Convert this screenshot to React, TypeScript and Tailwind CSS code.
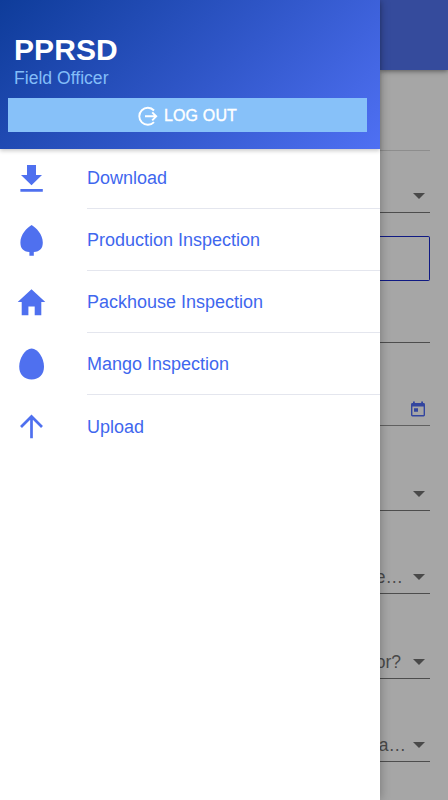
import React from 'react';
import clsx from 'clsx';

type MenuItemProps = {
  label: string;
  icon: React.ReactNode;
  className?: string;
  labelClassName?: string;
};

type FieldProps = {
  className: string;
  text?: string;
  textClassName?: string;
  children?: React.ReactNode;
};

const DownloadIcon = () => (
  <path d="M11 3h9v10h6L15.500 23.200 5 13h6zM4.400 27h22.400v2.700H4.400z" />
);

const LeafIcon = () => (
  <path d="M15.600 2c4.500 2.500 11.200 9.600 11.200 17.400 0 6-2.800 8.800-9 9.700v3.700h-4.400v-3.700C7.200 28.200 4.400 25.400 4.400 19.400 4.400 11.600 11.100 4.500 15.600 2z" />
);

const HomeIcon = () => (
  <path d="M15.500 4.200 29.300 17h-4v13.300h-6.600v-8.800h-6.300v8.800H5.700V17h-4z" />
);

const EggIcon = () => (
  <path d="M15.600 1.500c6.500 0 12.400 9.700 12.400 18.300 0 8-5 12.700-12.400 12.700S3.200 27.800 3.200 19.800C3.200 11.200 9.100 1.500 15.600 1.500z" />
);

const UploadIcon = () => (
  <path
    d="M15.500 28.300V7M5 17 15.500 6.500 26 17"
    fill="none"
    stroke="currentColor"
    strokeWidth="2.700"
  />
);

const LogOutIcon = () => (
  <svg
    className="size-5"
    viewBox="0 0 20 20"
    fill="none"
    stroke="currentColor"
    strokeWidth="1.9"
  >
    <path d="M16 4.500A8.500 8.500 0 1 0 16 16.100M7 10.300h11M14.200 6.300l4 4-4 4" />
  </svg>
);

const CalendarIcon = () => (
  <svg
    className="h-4 w-[14px] text-[#32459f]"
    viewBox="0 0 14 16"
    fill="currentColor"
  >
    <path
      fillRule="evenodd"
      d="M2 .500h1.800v1.500h6.400V.500H12v1.500h.600A1.400 1.400 0 0 1 14 3.400v10.600a1.400 1.400 0 0 1-1.400 1.400H1.400A1.400 1.400 0 0 1 0 14V3.400A1.400 1.400 0 0 1 1.400 2H2zM1.400 5.500v8.500h11.200V5.500zM3 7.300h4v3.500H3z"
    />
  </svg>
);

const Caret = () => (
  <svg className="h-[6px] w-3 shrink-0 text-[#494949]" viewBox="0 0 12 6">
    <path d="M0 0h12L6 6z" fill="currentColor" />
  </svg>
);

const MenuItem = ({
  label,
  icon,
  className,
  labelClassName,
}: MenuItemProps) => (
  <li className={clsx('flex pl-4', className ?? 'h-[62px]')}>
    <div className="flex w-[71px] items-center border-b border-transparent">
      <svg className="h-[33px] w-8" viewBox="0 0 32 33" fill="currentColor">
        {icon}
      </svg>
    </div>
    <div
      className={clsx(
        'flex flex-1 items-center border-b border-[#e4e6ee] text-lg text-[#3f67ee]',
        labelClassName
      )}
    >
      {label}
    </div>
  </li>
);

const Field = ({ className, text, textClassName, children }: FieldProps) => (
  <div
    className={clsx('flex w-[50px] items-end justify-end border-b', className)}
  >
    {text ? (
      <span
        className={clsx(
          'shrink-0 text-[17.5px] leading-5 text-[#494949]',
          textClassName
        )}
      >
        {text}
      </span>
    ) : null}
    {children}
  </div>
);

const App = () => {
  return (
    <div className="flex h-[800px] w-[448px] overflow-hidden bg-[#a6a6a6] font-['Liberation_Sans',sans-serif]">
      <aside className="z-10 flex w-[380px] shrink-0 flex-col bg-white shadow-[0_0_10px_rgba(0,0,0,0.3)]">
        <header className="h-[149px] bg-[linear-gradient(135deg,#0e3c9a_0%,#2e55c6_50%,#4f70f3_100%)] px-2 pt-8 shadow-[0_2px_4px_rgba(0,0,0,0.2)]">
          <h1 className="pl-1.5 text-[30px] leading-9 font-bold tracking-[0.1px] text-white">
            PPRSD
          </h1>
          <p className="pt-px pl-1.5 text-[17.6px] leading-[18px] text-[#83bdf8]">
            Field Officer
          </p>
          <button className="mt-[11px] flex h-[34px] w-[359px] items-center justify-center gap-1.5 bg-[#87c1f9] pt-px text-base tracking-[0.15px] text-white [-webkit-text-stroke:0.4px_white]">
            <LogOutIcon />
            <span className="pt-px">LOG OUT</span>
          </button>
        </header>
        <ul className="text-[#4f70ef]">
          <MenuItem
            label="Download"
            icon={<DownloadIcon />}
            className="h-[60px]"
            labelClassName="pb-0.5"
          />
          <MenuItem label="Production Inspection" icon={<LeafIcon />} />
          <MenuItem label="Packhouse Inspection" icon={<HomeIcon />} />
          <MenuItem label="Mango Inspection" icon={<EggIcon />} />
          <li className="flex h-[63px] items-center pl-4">
            <svg
              className="h-[33px] w-8"
              viewBox="0 0 32 33"
              fill="currentColor"
            >
              <UploadIcon />
            </svg>
            <span className="pl-[39px] text-lg text-[#3f67ee]">Upload</span>
          </li>
        </ul>
      </aside>
      <main className="flex w-[68px] flex-col">
        <div className="h-[70px] shrink-0 bg-[#354b9c] shadow-[0_1px_5px_rgba(0,0,0,0.5)]" />
        <Field className="h-[81px] border-[#8d8d8d]" />
        <Field className="h-[62px] border-[#4d4d4d] pr-[5px] pb-[13px]">
          <Caret />
        </Field>
        <div className="mt-[23px] h-[45px] w-[50px] rounded-r-[2px] border border-l-0 border-[#101a83]" />
        <Field className="h-[62px] border-[#4d4d4d]" />
        <Field className="h-[83px] border-[#606060] pr-[5px] pb-2">
          <CalendarIcon />
        </Field>
        <Field className="h-[85px] border-[#4d4d4d] pr-[5px] pb-[13px]">
          <Caret />
        </Field>
        <Field
          className="h-[83px] border-[#4d4d4d] pr-[5px] pb-[13px]"
          text="e…"
          textClassName="-mb-[7px] pr-[10px]"
        >
          <Caret />
        </Field>
        <Field
          className="h-[85px] border-[#4d4d4d] pr-[5px] pb-[13px]"
          text="or?"
          textClassName="-mb-[7px] pr-3"
        >
          <Caret />
        </Field>
        <Field
          className="h-[83px] border-[#4d4d4d] pr-[5px] pb-[13px]"
          text="a…"
          textClassName="-mb-[7px] pr-[7px]"
        >
          <Caret />
        </Field>
      </main>
    </div>
  );
};

export default App;
